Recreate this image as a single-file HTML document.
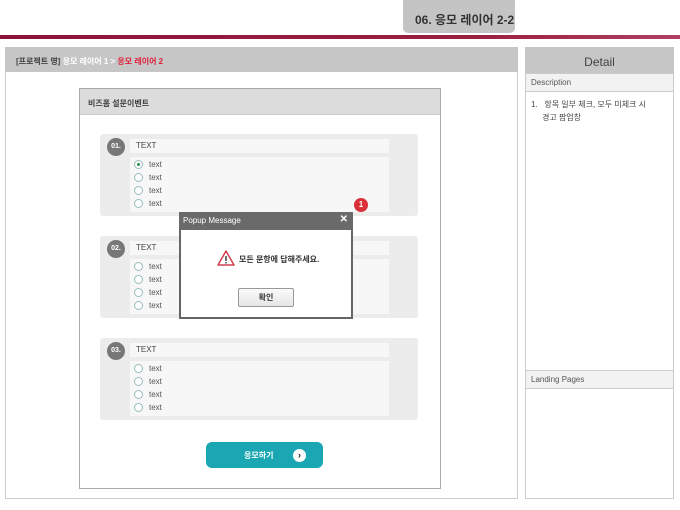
<!DOCTYPE html>
<html><head><meta charset="utf-8"><style>
*{margin:0;padding:0;box-sizing:border-box}
body{width:680px;height:510px;background:#fff;position:relative;overflow:hidden;font-family:"Liberation Sans","Noto Sans CJK KR",sans-serif;}
.a{position:absolute}
.tab{left:403px;top:0;width:112px;height:33px;background:#c4c4c4;border-radius:0 0 5px 5px;color:#333;font-size:12px;font-weight:bold;padding:11px 0 0 12px;white-space:nowrap}
.line{left:0;top:35px;width:680px;height:4px;background:linear-gradient(90deg,#8a1438,#9a2040 70%,#b04060);}
.main{left:5px;top:47px;width:513px;height:452px;border:1px solid #ccc;}
.mh{left:5px;top:47px;width:513px;height:25px;background:#c6c6c6;font-size:8px;color:#444;padding:9px 0 0 11px;font-weight:bold;white-space:nowrap}
.inner{left:79px;top:88px;width:362px;height:401px;border:1px solid #aaa;}
.ih{left:80px;top:89px;width:360px;height:26px;background:#dcdcdc;border-bottom:1px solid #ccc;font-size:8px;font-weight:bold;color:#444;padding:9px 0 0 8px}
.q{left:100px;width:318px;height:82px;background:#ececec;border-radius:3px}
.num{width:18px;height:18px;border-radius:50%;background:#777;color:#fff;font-size:7px;font-weight:bold;text-align:center;line-height:18px}
.tb{width:259px;height:14px;background:#f7f7f7;font-size:8px;color:#444;padding:2px 0 0 6px}
.ob{width:259px;height:55px;background:#f7f7f7}
.opt{font-size:8px;color:#555;height:13px;line-height:13px;padding-left:19px;position:relative}
.opt:before{content:"";position:absolute;left:4px;top:2px;width:9px;height:9px;border-radius:50%;border:1px solid #9bb;background:#fff;box-sizing:border-box}
.opt.c:after{content:"";position:absolute;left:7px;top:5px;width:3px;height:3px;border-radius:50%;background:#2a8a4a}
.rp{left:525px;top:47px;width:149px;height:452px;border:1px solid #ccc}
.rh{left:525px;top:47px;width:149px;height:26px;background:#c6c6c6;text-align:center;font-size:12px;color:#444;padding-top:8px}
.rs{left:525px;width:149px;height:19px;background:#f2f2f2;border:1px solid #ccc;font-size:8px;color:#555;padding:4px 0 0 5px}
</style></head><body>
<div class="a tab">06. 응모 레이어 2-2</div>
<div class="a line"></div>
<div class="a main"></div>
<div class="a mh">[프로젝트 명] <span style="color:#fff">응모 레이어 1 &gt;</span> <span style="color:#e0203a">응모 레이어 2</span></div>
<div class="a inner"></div>
<div class="a ih">비즈폼 설문이벤트</div>

<div class="a q" style="top:134px"></div>
<div class="a num" style="left:107px;top:138px">01.</div>
<div class="a tb" style="left:130px;top:139px">TEXT</div>
<div class="a ob" style="left:130px;top:157px;padding-top:1px"><div class="opt c">text</div><div class="opt">text</div><div class="opt">text</div><div class="opt">text</div></div>

<div class="a q" style="top:236px"></div>
<div class="a num" style="left:107px;top:240px">02.</div>
<div class="a tb" style="left:130px;top:241px">TEXT</div>
<div class="a ob" style="left:130px;top:259px;padding-top:1px"><div class="opt">text</div><div class="opt">text</div><div class="opt">text</div><div class="opt">text</div></div>

<div class="a q" style="top:338px"></div>
<div class="a num" style="left:107px;top:342px">03.</div>
<div class="a tb" style="left:130px;top:343px">TEXT</div>
<div class="a ob" style="left:130px;top:361px;padding-top:1px"><div class="opt">text</div><div class="opt">text</div><div class="opt">text</div><div class="opt">text</div></div>

<div class="a" style="left:206px;top:442px;width:117px;height:26px;background:#1aa6b2;border-radius:6px;color:#fff;font-size:8px;font-weight:bold;padding:8px 0 0 38px">응모하기</div>
<div class="a" style="left:293px;top:449px;width:13px;height:13px;border-radius:50%;background:#fff;color:#1a1a1a;font-size:9px;font-weight:bold;text-align:center;line-height:13px">&#x203A;</div>

<div class="a" style="left:179px;top:212px;width:174px;height:107px;border:2px solid #666;background:#fff"></div>
<div class="a" style="left:179px;top:212px;width:174px;height:18px;background:#6a6a6a;color:#fff;font-size:8px;padding:4px 0 0 4px">Popup Message<span style="position:absolute;right:5px;top:2px;font-size:10px;font-weight:bold">✕</span></div>
<svg class="a" style="left:217px;top:250px" width="18" height="16" viewBox="0 0 18 16"><path d="M9 1 L17 15 L1 15 Z" fill="#fff" stroke="#d04050" stroke-width="1.5" stroke-linejoin="round"/><rect x="8.3" y="6" width="1.4" height="5" fill="#333"/><rect x="8.3" y="12" width="1.4" height="1.4" fill="#333"/></svg>
<div class="a" style="left:239px;top:254px;font-size:8px;font-weight:bold;color:#333">모든 문항에 답해주세요.</div>
<div class="a" style="left:238px;top:288px;width:56px;height:19px;border:1px solid #999;border-radius:2px;background:linear-gradient(#fafafa,#e6e6e6);font-size:8px;font-weight:bold;color:#333;text-align:center;line-height:17px">확인</div>
<div class="a" style="left:354px;top:198px;width:14px;height:14px;border-radius:50%;background:#d9303a;color:#fff;font-size:8px;font-weight:bold;text-align:center;line-height:14px">1</div>

<div class="a rp"></div>
<div class="a rh">Detail</div>
<div class="a rs" style="top:73px">Description</div>
<div class="a" style="left:531px;top:98px;font-size:8px;color:#444;line-height:13px;width:140px">1.&nbsp;&nbsp;&nbsp;항목 일부 체크, 모두 미체크 시<br><span style="padding-left:11px">경고 팝업창</span></div>
<div class="a rs" style="top:370px">Landing Pages</div>
</body></html>
